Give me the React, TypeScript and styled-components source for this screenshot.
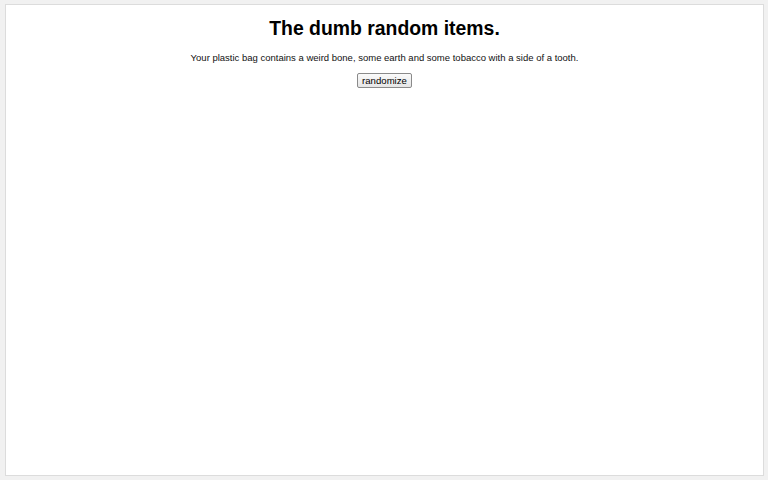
import React, { useState } from "react";
import styled, { createGlobalStyle } from "styled-components";

const GlobalStyle = createGlobalStyle`
  html, body {
    margin: 0;
    padding: 0;
    background: #f1f1f1;
    font-family: "Liberation Sans", Arial, sans-serif;
  }
`;

const Page = styled.div`
  padding: 4px 4px 4px 5px;
  height: 480px;
  box-sizing: border-box;
`;

const Card = styled.div`
  background: #fff;
  border: 1px solid #dcdcdc;
  height: 100%;
  box-sizing: border-box;
  display: flex;
  flex-direction: column;
  align-items: center;
  padding-top: 12px;
`;

const Title = styled.h1`
  margin: 0;
  font-size: 19.4px;
  font-weight: bold;
  line-height: 23px;
  color: #000;
`;

const Sentence = styled.p`
  margin: 12px 0 0;
  font-size: 9.5px;
  line-height: 12px;
  color: #111;
`;

const Button = styled.button`
  margin-top: 9px;
  font-family: "Liberation Sans", Arial, sans-serif;
  font-size: 9.6px;
  line-height: 12px;
  padding: 0 4px;
  height: 15px;
  border: 1px solid #8a8a8a;
  border-radius: 2px;
  background: linear-gradient(#fafafa, #e6e6e6);
  color: #000;
  cursor: pointer;
`;

const containers = ["plastic bag", "paper sack", "shoebox", "backpack"];
const items = ["a weird bone", "some earth", "some tobacco", "a tooth", "a rusty key", "some string"];

const pick = (list: string[]) => list[Math.floor(Math.random() * list.length)];

export default function App() {
  const [text, setText] = useState(
    "Your plastic bag contains a weird bone, some earth and some tobacco with a side of a tooth."
  );

  const randomize = () => {
    setText(
      `Your ${pick(containers)} contains ${pick(items)}, ${pick(items)} and ${pick(items)} with a side of ${pick(items)}.`
    );
  };

  return (
    <>
      <GlobalStyle />
      <Page>
        <Card>
          <Title>The dumb random items.</Title>
          <Sentence>{text}</Sentence>
          <Button onClick={randomize}>randomize</Button>
        </Card>
      </Page>
    </>
  );
}
